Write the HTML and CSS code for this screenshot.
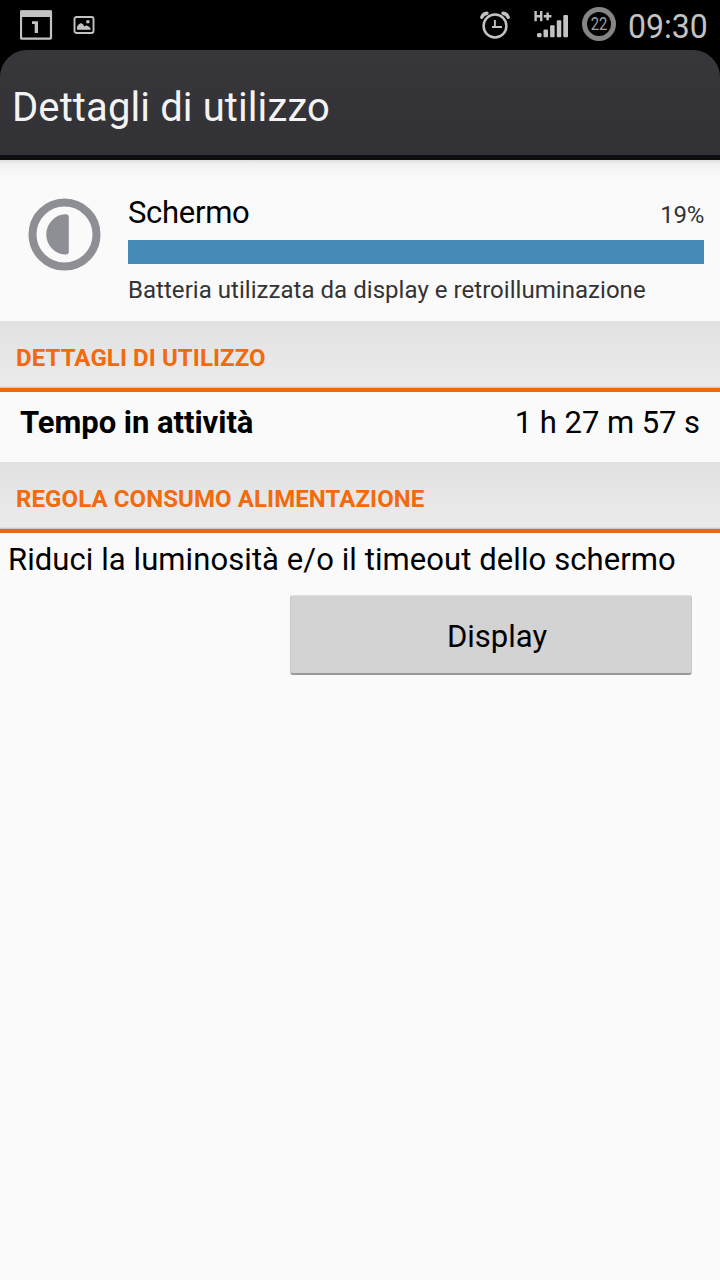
FILE: index.html
```html
<!DOCTYPE html>
<html lang="it">
<head>
<meta charset="utf-8">
<title>Dettagli di utilizzo</title>
<link rel="stylesheet" href="styles.css">
</head>
<body>
<div class="status">
  <svg class="ic-cal" width="34" height="32" viewBox="0 0 34 32">
    <rect x="1" y="1.5" width="30" height="27.2" rx="1" fill="none" stroke="#c3c3c3" stroke-width="2.2"/>
    <rect x="0" y="0.3" width="32" height="6.7" rx="1" fill="#c3c3c3"/>
    <path d="M12 11.200H18V23H14.700V14H12Z" fill="#c3c3c3"/>
  </svg>
  <svg class="ic-pic" width="22" height="19" viewBox="0 0 22 19">
    <rect x="1.500" y="1" width="19" height="16" rx="2" fill="none" stroke="#c3c3c3" stroke-width="1.9"/>
    <path d="M4 13.800V11Q6 7 8.500 7.300Q10.300 8 11.500 10.400Q13.300 8.800 14.900 9.900L17.500 12V13.800Z" fill="#c3c3c3"/>
    <circle cx="14.900" cy="5.700" r="1.800" fill="#c3c3c3"/>
  </svg>
  <div class="spacer"></div>
  <svg class="ic-alarm" width="32" height="30" viewBox="0 0 32 30" fill="none" stroke="#c3c3c3">
    <circle cx="15" cy="16" r="11.400" stroke-width="2.500"/>
    <path d="M14.900 10V18M12 17H22" stroke-width="1.900"/>
    <path d="M1.800 7.300Q3 3.600 7 3.200M23 3.200Q27 3.600 28.200 7.300" stroke-width="3.400" stroke-linecap="round"/>
  </svg>
  <svg class="ic-signal" width="36" height="30" viewBox="0 0 36 30" fill="#c3c3c3">
    <path d="M1.600 0V10.200M7.200 0V10.200M1.500 5.300H7.500M9.800 5.200H17.400M13.600 1.400V9.200" stroke="#c3c3c3" stroke-width="2.400"/>
    <rect x="3" y="22" width="4.600" height="4.200" rx="1.500"/>
    <rect x="9.500" y="18.500" width="4.500" height="7.700" rx="1"/>
    <rect x="16.100" y="14.300" width="4.500" height="11.900" rx="1"/>
    <rect x="22.800" y="9.200" width="4.500" height="17" rx="1"/>
    <rect x="29.300" y="4" width="4.700" height="22.200" rx="1"/>
  </svg>
  <div class="battery"><span>22</span></div>
  <div class="clock"><span>09:30</span></div>
</div>
<header class="bar"><h1>Dettagli di utilizzo</h1></header>
<main>
  <section class="usage">
    <svg class="ic-display" width="74" height="74" viewBox="0 0 74 74">
      <circle cx="37.500" cy="37.500" r="32" fill="none" stroke="#8e8f94" stroke-width="8"/>
      <path d="M38 17.300Q41.800 16.800 41.800 20.500V54.300Q41.800 58 38 57.500A20.150 20.150 0 0 1 38 17.300Z" fill="#8e8f94"/>
    </svg>
    <div class="info">
      <div class="line"><span class="name">Schermo</span><span class="pct">19%</span></div>
      <div class="meter"></div>
      <p class="desc">Batteria utilizzata da display e retroilluminazione</p>
    </div>
  </section>
  <h2 class="section">DETTAGLI DI UTILIZZO</h2>
  <div class="row"><b>Tempo in attività</b><span>1 h 27 m 57 s</span></div>
  <h2 class="section">REGOLA CONSUMO ALIMENTAZIONE</h2>
  <p class="hint">Riduci la luminosità e/o il timeout dello schermo</p>
  <button class="action" type="button">Display</button>
</main>
</body>
</html>
```
FILE: styles.css
```css
* { box-sizing: border-box; }
body {
  margin: 0;
  width: 720px;
  height: 1280px;
  overflow: hidden;
  display: flex;
  flex-direction: column;
  background: #000;
  color: #000;
  font-family: Roboto, sans-serif;
}
h1, h2, p { margin: 0; }
.status {
  height: 50px;
  display: flex;
  align-items: flex-start;
  padding: 0 12px 0 20px;
}
.ic-cal { margin-top: 10px; }
.ic-pic { margin: 16px 0 0 19px; }
.spacer { flex: 1; }
.ic-alarm { margin-top: 10px; }
.ic-signal { margin: 11px 0 0 22px; }
.battery {
  width: 34px;
  height: 34px;
  margin: 7px 0 0 12px;
  border: 5px solid #858585;
  border-radius: 50%;
  color: #a0a0a0;
  font-size: 18px;
  line-height: 24px;
  text-align: center;
}
.battery span { display: inline-block; transform: scaleX(0.82); margin: 0 -4px; }
.clock {
  width: 80px;
  margin-left: 12px;
  color: #c3c3c3;
  font-size: 34px;
  line-height: 52px;
}
.clock span { display: inline-block; transform: scaleX(0.94); transform-origin: left; }
.bar {
  height: 110px;
  border-bottom: 5px solid #0f0f0f;
  border-radius: 27px 27px 0 0;
  background: linear-gradient(#37363b, #323136);
  padding-left: 12px;
}
.bar h1 {
  color: #f3f3f3;
  font-size: 40px;
  font-weight: 400;
  letter-spacing: 0.1px;
  line-height: 115px;
}
main {
  flex: 1;
  background: linear-gradient(#dedede, #f1f1f1 4px, #fafafa 18px);
}
.usage {
  height: 161px;
  display: flex;
  padding: 37px 16px 0 27px;
}
.info { flex: 1; margin-left: 27px; }
.line {
  height: 43px;
  display: flex;
  justify-content: space-between;
}
.name { font-size: 31px; letter-spacing: -0.3px; line-height: 31px; }
.pct { color: #333; font-size: 24px; letter-spacing: -0.25px; line-height: 36px; }
.meter { height: 24px; background: #468ab8; }
.desc { color: #333; font-size: 24px; letter-spacing: 0.04px; line-height: 52px; white-space: nowrap; }
.section {
  height: 71px;
  border-bottom: 4px solid #ee690d;
  background: linear-gradient(#e2e1e2, #ebebeb 65px, #b9bfc8);
  color: #f26a0d;
  font-size: 24px;
  font-weight: 700;
  letter-spacing: 0.09px;
  line-height: 74px;
  padding-left: 16px;
}
.row {
  height: 70px;
  display: flex;
  justify-content: space-between;
  padding: 0 20px;
  font-size: 31px;
  line-height: 61px;
}
.row b { letter-spacing: -0.04px; }
.row span { letter-spacing: -0.05px; }
.hint { padding-left: 8px; font-size: 31px; letter-spacing: 0.08px; line-height: 53px; white-space: nowrap; }
.action {
  display: block;
  width: 402px;
  height: 80px;
  margin: 9px 28px 0 auto;
  padding: 5px 0 0 12px;
  border: 1px solid #c9c9c9;
  border-top-color: #dedede;
  border-bottom: 2px solid #999;
  border-radius: 3px;
  background: #d3d3d3;
  color: #000;
  font: 31px/72px Roboto, sans-serif;
}
```
